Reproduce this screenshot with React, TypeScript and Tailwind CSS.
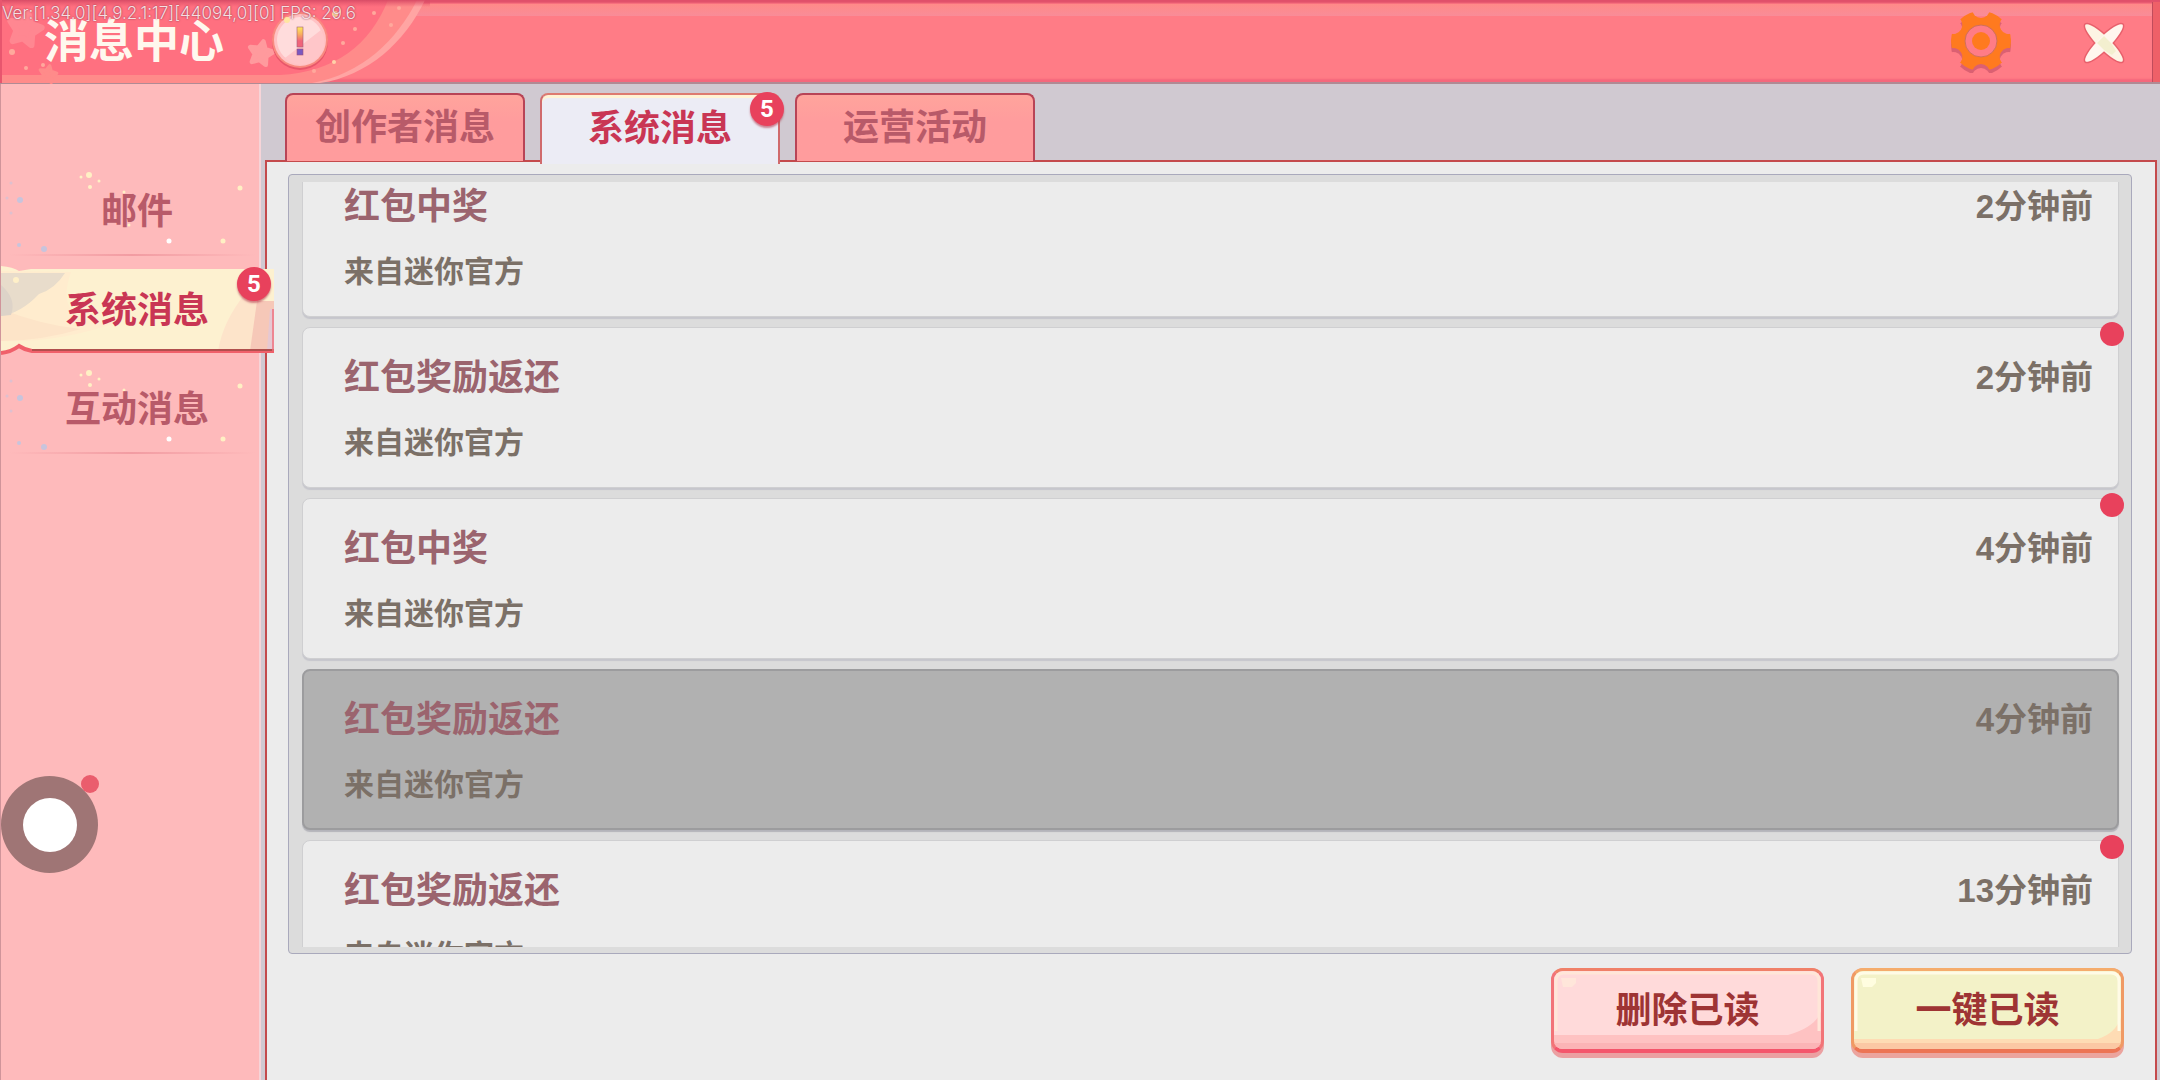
import React from "react";

type Message = { id: number; title: string; from: string; time: string; unread: boolean };

const messages: Message[] = [
  { id: 1, title: "红包中奖", from: "来自迷你官方", time: "2分钟前", unread: true },
  { id: 2, title: "红包奖励返还", from: "来自迷你官方", time: "2分钟前", unread: true },
  { id: 3, title: "红包中奖", from: "来自迷你官方", time: "4分钟前", unread: true },
  { id: 4, title: "红包奖励返还", from: "来自迷你官方", time: "4分钟前", unread: false },
  { id: 5, title: "红包奖励返还", from: "来自迷你官方", time: "13分钟前", unread: true },
];

function Badge({ count }: { count: number }) {
  return (
    <span className="flex size-[34px] items-center justify-center rounded-full bg-[#e8415c] font-['Roboto',sans-serif] text-2xl font-bold text-white shadow-[0_2px_2px_rgba(180,60,80,0.6)]">
      {count}
    </span>
  );
}

function Star({ x, y, r, fill }: { x: number; y: number; r: number; fill: string }) {
  const d = "M0 -10L3 -4L10 -3L5 2L6 9L0 6L-6 9L-5 2L-10 -3L-3 -4Z";
  return (
    <path
      d={d}
      fill={fill}
      stroke={fill}
      strokeWidth="4"
      strokeLinejoin="round"
      transform={`translate(${x} ${y}) scale(${r / 12}) rotate(12)`}
    />
  );
}

function HeaderArt() {
  return (
    <svg className="absolute left-0 top-0 h-[84px] w-[430px]" viewBox="0 0 430 84" aria-hidden="true">
      <defs>
        <linearGradient id="mark" x1="0" y1="0" x2="0" y2="1">
          <stop offset="0" stopColor="#ffe95a" />
          <stop offset="0.35" stopColor="#f9b25e" />
          <stop offset="0.7" stopColor="#f0647a" />
        </linearGradient>
        <linearGradient id="topEdge" x1="0" y1="0" x2="0" y2="1">
          <stop offset="0" stopColor="#d84c66" />
          <stop offset="1" stopColor="#e8566e" stopOpacity="0" />
        </linearGradient>
      </defs>
      <path d="M0 0H425C405 42 368 76 320 83H0Z" fill="#ffa5a3" />
      <path d="M0 0H417C397 40 362 74 312 83H0Z" fill="#ff8b8a" />
      <path d="M0 0H388C370 45 335 72 280 75H0Z" fill="#ff7080" />
      <Star x={25} y={29} r={19} fill="#ff8791" />
      <Star x={48} y={74} r={10} fill="#ff8b8a" />
      <Star x={261} y={53} r={14} fill="#ff9a9d" />
      <g fill="#ffa99c">
        <circle cx="12" cy="52" r="3" />
        <circle cx="26" cy="68" r="2" />
        <circle cx="43" cy="65" r="2" />
        <circle cx="343" cy="43" r="2" />
        <circle cx="355" cy="29" r="2" />
        <circle cx="374" cy="13" r="2" />
        <circle cx="391" cy="25" r="2" />
        <circle cx="399" cy="8" r="2" />
        <circle cx="314" cy="71" r="2" />
      </g>
      <circle cx="334" cy="62" r="2" fill="#ffd2a8" />
      <circle cx="335" cy="14" r="3" fill="#ffdca0" />
      <rect x="0" y="0" width="430" height="7" fill="url(#topEdge)" />
      <rect x="0" y="0" width="2" height="83" fill="#e8566e" />
      <circle cx="300" cy="42" r="28" fill="#e8566a" />
      <circle cx="300" cy="40" r="28" fill="#f98a80" />
      <circle cx="300" cy="40" r="26" fill="#ffc2c4" />
      <circle cx="300" cy="40" r="23" fill="#ffdcdc" />
      <path d="M321 30A23 23 0 0 1 285 58Z" fill="#ffc6c9" />
      <circle cx="287" cy="20" r="3" fill="#ffe6a0" />
      <rect x="297" y="27" width="6" height="20" fill="url(#mark)" stroke="#a0607a" strokeWidth="0.6" />
      <rect x="297" y="49" width="6" height="6" fill="#7a58c0" stroke="#a0507a" strokeWidth="0.6" />
    </svg>
  );
}

function GearIcon() {
  return (
    <svg className="size-16" viewBox="-32 -32 64 64" aria-hidden="true">
      <defs>
        <mask id="gear">
          <circle r="30" fill="white" />
          {[30, 90, 150, 210, 270, 330].map((a) => (
            <circle key={a} cx="32" cy="0" r="9" fill="black" transform={`rotate(${a})`} />
          ))}
          <circle r="16" fill="black" />
          <circle r="9" fill="white" />
        </mask>
      </defs>
      <g transform="translate(0 4)" opacity="0.45">
        <rect x="-32" y="-32" width="64" height="64" fill="#b0405a" mask="url(#gear)" />
      </g>
      <circle r="16" fill="#ff7c86" />
      <rect x="-32" y="-32" width="64" height="64" fill="#ff7a1f" mask="url(#gear)" />
      <circle r="16" fill="none" stroke="#d0705a" strokeWidth="1" />
    </svg>
  );
}

function CloseIcon() {
  return (
    <svg className="size-12" viewBox="-24 -26 48 48" aria-hidden="true">
      <g stroke="#e8606c" strokeWidth="3">
        <ellipse rx="26" ry="6" transform="rotate(45)" />
        <ellipse rx="26" ry="6" transform="rotate(-45)" />
      </g>
      <ellipse rx="26" ry="6" transform="rotate(45)" fill="#fdf4e4" />
      <ellipse rx="26" ry="6" transform="rotate(-45)" fill="#fff6ee" />
      <path d="M0 -7L7 0L12 8L8 12L0 7L-7 0Z" fill="#f3efcf" />
    </svg>
  );
}

function Sparkles() {
  return (
    <svg className="absolute left-0 top-0 h-[99px] w-[261px]" viewBox="0 0 261 99" aria-hidden="true">
      <g fill="#fff0c4">
        <circle cx="88" cy="15" r="3" />
        <circle cx="80" cy="17" r="1.5" />
        <circle cx="98" cy="21" r="1.5" />
        <circle cx="89" cy="27" r="2" />
        <circle cx="239" cy="28" r="2.5" />
        <circle cx="222" cy="81" r="2.5" />
        <circle cx="123" cy="32" r="1.5" />
        <circle cx="128" cy="65" r="1.5" />
      </g>
      <circle cx="168" cy="81" r="2.5" fill="#ffffff" />
      <g fill="#c8c4dc">
        <circle cx="19" cy="40" r="3" />
        <circle cx="43" cy="89" r="3" />
        <circle cx="18" cy="85" r="2" />
        <circle cx="10" cy="23" r="1.5" opacity="0.6" />
        <circle cx="6" cy="38" r="1.5" opacity="0.6" />
        <circle cx="10" cy="53" r="1.5" opacity="0.6" />
      </g>
      <defs>
        <linearGradient id="rule">
          <stop offset="0" stopColor="#f29ca2" stopOpacity="0" />
          <stop offset="0.5" stopColor="#f29ca2" />
          <stop offset="1" stopColor="#f29ca2" stopOpacity="0" />
        </linearGradient>
      </defs>
      <rect x="8" y="94" width="246" height="2" fill="url(#rule)" />
    </svg>
  );
}

function Ribbon() {
  return (
    <svg className="absolute left-0 top-0 h-[99px] w-[273px]" viewBox="0 0 273 99" aria-hidden="true">
      <defs>
        <clipPath id="ribbon">
          <path d="M0 7Q12 8 18 12Q24 11 30 10H274V92H30Q24 90 18 87Q10 94 0 94Z" />
        </clipPath>
      </defs>
      <g clipPath="url(#ribbon)">
        <rect width="274" height="99" fill="#fdf1d0" />
        <path d="M0 12L70 13Q50 70 120 62Q60 84 0 82Z" fill="#ffecce" />
        <path d="M0 50Q40 66 80 70Q40 82 0 82Z" fill="#fde4c8" />
        <path d="M0 14H64Q54 30 38 35Q20 54 0 57Z" fill="#e8dccb" />
        <path d="M0 26Q16 40 10 56L0 57Z" fill="#ddd3c8" />
        <circle cx="15" cy="21" r="3" fill="#fff0c8" />
        <path d="M217 92Q222 62 244 35H262L250 92Z" fill="#fde4ca" />
        <path d="M249 92L256 42H274V92Z" fill="#f6c8b8" />
        <path d="M266 92L269 50H274V92Z" fill="#e6c8d2" />
      </g>
      <path d="M0 94Q10 93 18 87Q24 91 31 92H274" fill="none" stroke="#f0606a" strokeWidth="4" />
      <path d="M31 91H274" fill="none" stroke="#9c4a44" strokeWidth="1.5" />
      <path d="M272 50V92" stroke="#f0707c" strokeWidth="1.5" />
    </svg>
  );
}

function SideItem({ label, active, count }: { label: string; active?: boolean; count?: number }) {
  return (
    <li className="relative h-[99px]">
      {active ? <Ribbon /> : <Sparkles />}
      <button
        type="button"
        aria-current={active ? "page" : undefined}
        className={
          active
            ? "relative h-full w-[272px] pb-1 text-center text-4xl font-bold text-[#c93654]"
            : "relative h-full w-[272px] pb-1 text-center text-4xl font-bold text-[#b85a69]"
        }
      >
        {label}
      </button>
      {count ? (
        <div className="absolute -right-3 top-2">
          <Badge count={count} />
        </div>
      ) : null}
    </li>
  );
}

function Tab({ label, active, count }: { label: string; active?: boolean; count?: number }) {
  return (
    <div className="relative w-[240px]">
      <button
        type="button"
        role="tab"
        aria-selected={!!active}
        className={
          active
            ? "relative z-10 h-[71px] w-full rounded-t-lg border-x-2 border-t-2 border-t-[#dd7a70] border-x-[#d06a6c] bg-[#ececf5] pb-2.5 text-4xl font-bold text-[#c93654] shadow-[inset_0_3px_0_#fff3d4]"
            : "h-[68px] w-full rounded-t-lg border-x-2 border-t-2 border-[#b84456] bg-linear-to-b from-[#ffa49c] to-[#ff9c9d] to-40% pb-2 text-4xl font-bold text-[#b85a69]"
        }
      >
        {label}
      </button>
      {count ? (
        <div className="absolute -right-1 -top-px z-20">
          <Badge count={count} />
        </div>
      ) : null}
    </div>
  );
}

function MessageCard({ message }: { message: Message }) {
  return (
    <li
      className={
        message.unread
          ? "relative flex h-[161px] shrink-0 justify-between rounded-lg border border-[#cfcfd1] bg-[#ececec] pl-[41px] pr-[25px] pt-[22px] shadow-[0_2px_1px_#c6c6cc]"
          : "relative flex h-[161px] shrink-0 justify-between rounded-lg border-2 border-[#9c9c9e] bg-[#b1b1b1] pl-10 pr-6 pt-[21px] shadow-[0_2px_1px_#b4b4ba]"
      }
    >
      <div className="flex flex-col gap-[22px]">
        <h2 className="text-4xl/[48px] font-bold text-[#9b646e]">{message.title}</h2>
        <p className="text-[30px]/[40px] font-bold text-[#7b7067]">{message.from}</p>
      </div>
      <time className="pt-1 font-['Liberation_Sans','Noto_Sans_CJK_SC',sans-serif] text-[33px]/[48px] font-bold text-[#7b7067]">
        {message.time}
      </time>
      {message.unread && (
        <span className="absolute -right-1.5 -top-1.5 size-6 rounded-full bg-[#e8415c]" aria-label="未读" />
      )}
    </li>
  );
}

function ActionButton({ label, tone }: { label: string; tone: "pink" | "cream" }) {
  const pink = tone === "pink";
  return (
    <button
      type="button"
      className={
        pink
          ? "relative h-[90px] w-[273px] rounded-xl bg-[#eba0a2] pb-[5px] text-4xl font-bold text-[#9e3434]"
          : "relative h-[90px] w-[273px] rounded-xl bg-[#eba49e] pb-[5px] text-4xl font-bold text-[#9e3434]"
      }
    >
      <span
        className={
          pink
            ? "relative flex h-full items-center justify-center overflow-hidden rounded-xl border-[3px] border-b-4 border-t-[#f08068] border-x-[#f27478] border-b-[#f4566c] bg-[#fec2c2] pb-1.5"
            : "relative flex h-full items-center justify-center overflow-hidden rounded-xl border-[3px] border-b-4 border-t-[#f5ac6c] border-x-[#f09a64] border-b-[#ec7454] bg-[#fedcb4] pb-1.5"
        }
      >
        <svg className="absolute inset-0 size-full" viewBox="0 0 267 78" preserveAspectRatio="none" aria-hidden="true">
          <path
            d={pink ? "M0 0H267V40Q262 56 234 64H0Z" : "M0 0H267V46Q262 62 244 68H0Z"}
            fill={pink ? "#ffdada" : "#f3f2c8"}
          />
          <rect x="0" y="72" width="267" height="6" fill={pink ? "#fbb4b6" : "#fbc8a4"} />
          <path d="M2 60V10Q2 2 10 2H257Q265 2 265 10V60" fill="none" stroke={pink ? "#ffe6d8" : "#fffbe6"} strokeWidth="3" />
          <path d="M7 7H22V12L18 16H9Z" fill={pink ? "#ffe6da" : "#fffde0"} />
        </svg>
        <span className="relative">{label}</span>
      </span>
    </button>
  );
}

export default function App() {
  return (
    <div className="relative flex h-screen flex-col overflow-hidden bg-[#d0c9d1] font-['Noto_Sans_CJK_SC',sans-serif]">
      <header className="relative flex h-[84px] shrink-0 items-center justify-between border-b-2 border-[#b08a94] bg-[#ff7c86] pl-11 pr-8 shadow-[inset_0_3px_2px_#e0506a,inset_0_-3px_2px_#f5687c]">
        <div className="absolute left-[415px] right-0 top-1 h-3 bg-linear-to-b from-[#ff8a88] to-[#f98c98]" />
        <div className="absolute bottom-0 right-0 top-0.5 w-2 border-l border-[#c04c5c] bg-[#ee6068]" />
        <HeaderArt />
        <h1 className="relative pb-1 text-[45px]/[60px] font-bold text-[#fff8ee]">消息中心</h1>
        <div className="relative flex items-center gap-[67px]">
          <button type="button" aria-label="设置">
            <GearIcon />
          </button>
          <button type="button" aria-label="关闭">
            <CloseIcon />
          </button>
        </div>
        <p className="absolute left-0.5 top-0 font-['Inter',sans-serif] text-[17px]/[26px] font-light text-[#f6dfe2] [text-shadow:0_0_2px_#803040]">
          Ver:[1.34.0][4.9.2.1:17][44094,0][0] FPS: 29.6
        </p>
      </header>

      <div className="flex min-h-0 flex-1">
        <nav className="relative z-10 w-[261px] shrink-0 border-l border-r-2 border-l-[#d0949a] border-r-[#f6d4d8] bg-[#febabb] pt-[76px]">
          <ul>
            <SideItem label="邮件" />
            <SideItem label="系统消息" active count={5} />
            <SideItem label="互动消息" />
          </ul>
        </nav>

        <main className="flex min-w-0 flex-1 flex-col pl-1 pr-[3px]">
          <div role="tablist" className="flex h-[76px] shrink-0 items-start gap-[15px] pl-5 pt-[9px]">
            <Tab label="创作者消息" />
            <Tab label="系统消息" active count={5} />
            <Tab label="运营活动" />
          </div>

          <section className="flex min-h-0 flex-1 flex-col gap-3.5 border-x-2 border-t-2 border-[#c44a4c] bg-[#ececec] pb-[22px] pl-[21px] pr-[23px] pt-3">
            <div className="min-h-0 flex-1 rounded border border-[#a9a9bc] bg-[#dcdcdc] pb-1.5 pl-[13px] pr-px pt-[7px]">
              <ul className="-mr-px flex h-full flex-col gap-2.5 overflow-hidden pr-3">
                <li className="-mt-9 shrink-0" aria-hidden="true" />
                {messages.map((m) => (
                  <MessageCard key={m.id} message={m} />
                ))}
              </ul>
            </div>
            <div className="flex shrink-0 justify-end gap-[27px] pr-2">
              <ActionButton label="删除已读" tone="pink" />
              <ActionButton label="一键已读" tone="cream" />
            </div>
          </section>
        </main>
      </div>

      <button
        type="button"
        aria-label="悬浮菜单"
        className="absolute bottom-[207px] left-px z-20 flex size-[97px] items-center justify-center rounded-full bg-[#9f7575]"
      >
        <span className="size-[54px] rounded-full bg-white" />
        <span className="absolute -right-px -top-px size-[18px] rounded-full bg-[#ea5d6d]" />
      </button>
    </div>
  );
}
